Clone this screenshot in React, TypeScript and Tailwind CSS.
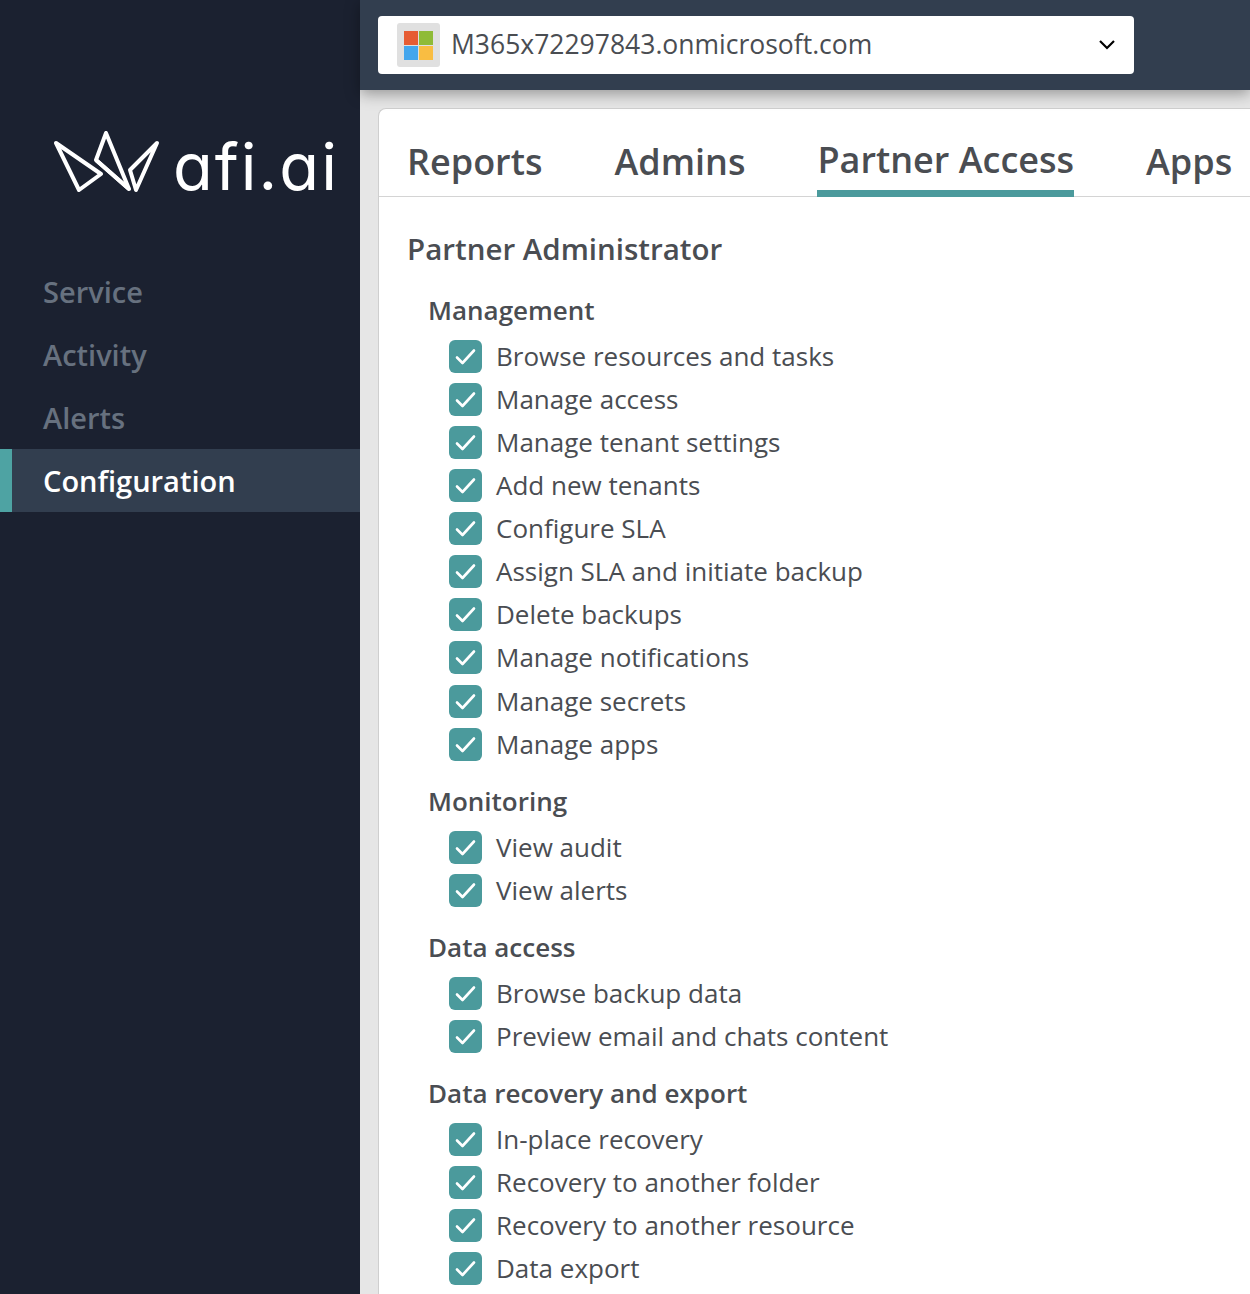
import React from "react";

const groups: { title: string; items: string[] }[] = [
  {
    title: "Management",
    items: [
      "Browse resources and tasks",
      "Manage access",
      "Manage tenant settings",
      "Add new tenants",
      "Configure SLA",
      "Assign SLA and initiate backup",
      "Delete backups",
      "Manage notifications",
      "Manage secrets",
      "Manage apps",
    ],
  },
  { title: "Monitoring", items: ["View audit", "View alerts"] },
  { title: "Data access", items: ["Browse backup data", "Preview email and chats content"] },
  {
    title: "Data recovery and export",
    items: ["In-place recovery", "Recovery to another folder", "Recovery to another resource", "Data export"],
  },
];

function Logo() {
  return (
    <div className="flex items-end h-[66px] pl-[54px]">
      <svg width="106" height="66" viewBox="0 0 106 66" fill="none" stroke="#fff" strokeWidth="4" strokeLinejoin="round" className="shrink-0">
        <path d="M2 12 L25 59 L47 43 Z" />
        <path d="M42 29 L52 2 L75 58 Z" fill="none" />
        <path d="M42 29 L75 58" />
        <path d="M76 39 L103 12 L82 59 Z" />
      </svg>
      <span className="ml-[13px] text-[65px] leading-[60px] text-white font-['Inter',sans-serif] font-normal tracking-[2px] [font-feature-settings:'cv11']">
        afi.ai
      </span>
    </div>
  );
}

function Check() {
  return (
    <span className="w-[33px] h-[33px] rounded-[6px] bg-[#4b9a9c] flex items-center justify-center shrink-0">
      <svg width="33" height="33" viewBox="0 0 33 33" fill="none" stroke="#fff" strokeWidth="2.6" strokeLinecap="round" strokeLinejoin="round">
        <path d="M8 17.5 L13.5 23 L25 10.5" />
      </svg>
    </span>
  );
}

export default function App() {
  return (
    <div className="w-[1250px] h-[1294px] overflow-hidden flex font-['Open_Sans',sans-serif] bg-[#fff]">
      <aside className="w-[360px] shrink-0 bg-[#1b2130] pt-[131px]">
        <Logo />
        <nav className="mt-[63px] text-[29px] font-semibold text-[#67717f]">
          <div className="h-[63px] pl-[43px] flex items-center">Service</div>
          <div className="h-[63px] pl-[43px] flex items-center">Activity</div>
          <div className="h-[63px] pl-[43px] flex items-center">Alerts</div>
          <div className="h-[63px] pl-[31px] flex items-center bg-[#323e4f] border-l-[12px] border-[#4ea3a3] text-white">Configuration</div>
        </nav>
      </aside>
      <main className="flex-1 min-w-0 flex flex-col bg-[#e6e6e6]">
        <header className="h-[90px] shrink-0 bg-[#323e4f] pl-[18px] pt-[16px] shadow-[0_4px_14px_rgba(0,0,0,0.35)] relative">
          <div className="w-[756px] h-[58px] bg-white rounded-[4px] flex items-center pl-[19px] pr-[18px]">
            <div className="w-[43px] h-[44px] bg-[#e0e0e0] rounded-[3px] grid grid-cols-[14px_14px] grid-rows-[14px_14px] gap-[1px] content-center justify-center shrink-0">
              <span className="bg-[#e65c33]" />
              <span className="bg-[#8fbb37]" />
              <span className="bg-[#44a6ed]" />
              <span className="bg-[#f9bd42]" />
            </div>
            <span className="ml-[11px] text-[26.5px] text-[#4a4d52] flex-1">M365x72297843.onmicrosoft.com</span>
            <svg width="18" height="12" viewBox="0 0 18 12" fill="none" stroke="#000" strokeWidth="2.2">
              <path d="M2 2 L9 9 L16 2" />
            </svg>
          </div>
        </header>
        <section className="mt-[18px] ml-[18px] flex-1 bg-white border-t border-l border-[#cfcfcf] rounded-tl-[8px]">
          <div className="h-[88px] border-b border-[#d4d4d4] flex items-end pl-[28px] gap-[72px] text-[36px] font-semibold text-[#4a4d52] whitespace-nowrap">
            <div className="h-[88px] flex items-center pt-[20px] ">Reports</div>
            <div className="h-[88px] flex items-center pt-[20px]">Admins</div>
            <div className="h-[88px] flex items-center pt-[20px] border-b-[7px] border-[#4b9a9c] -mb-[1px] pb-0">Partner Access</div>
            <div className="h-[88px] flex items-center pt-[20px]">Apps</div>
          </div>
          <h2 className="mt-[30px] ml-[28px] h-[44px] flex items-center text-[29.5px] font-semibold text-[#4a4d52]">Partner Administrator</h2>
          <div className="mt-[16px] ml-[49px] flex flex-col gap-[12.4px]">
            {groups.map((g) => (
              <div key={g.title}>
                <h3 className="h-[46px] mb-[1.5px] flex items-center text-[26px] font-semibold text-[#4a4d52]">{g.title}</h3>
                {g.items.map((it) => (
                  <label key={it} className="h-[43.14px] ml-[21px] flex items-center gap-[14px] text-[26px] text-[#4a4d52]">
                    <Check />
                    <span>{it}</span>
                  </label>
                ))}
              </div>
            ))}
          </div>
        </section>
      </main>
    </div>
  );
}
